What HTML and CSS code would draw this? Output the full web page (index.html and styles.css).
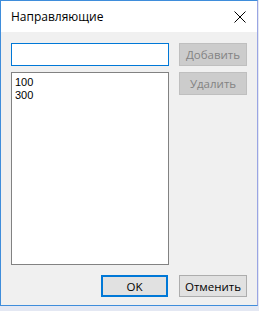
FILE: index.html
```html
<!doctype html>
<html>
<head>
<meta charset="utf-8">
<title>Направляющие</title>
<link rel="stylesheet" href="styles.css">
</head>
<body>
<div class="window">
  <div class="titlebar">
    <span class="title">Направляющие</span>
    <svg class="close" width="12" height="12" viewBox="0 0 12 12">
      <path d="M0.5 0.5 L11.5 11.5 M11.5 0.5 L0.5 11.5" stroke="#000" stroke-width="1" fill="none"/>
    </svg>
  </div>
  <div class="client">
    <div class="grid">
      <div class="edit"></div>
      <button class="btn disabled">Добавить</button>
      <div class="list">
        <div class="item">100</div>
        <div class="item">300</div>
      </div>
      <div class="side">
        <button class="btn disabled">Удалить</button>
      </div>
    </div>
    <div class="footer">
      <button class="btn default">OK</button>
      <button class="btn">Отменить</button>
    </div>
  </div>
</div>
</body>
</html>
```

FILE: styles.css
```css
body {
	margin: 0;
	background-color: #e4e8f3;
}
.window {
	width: 256px;
	border: 1px solid #3f8ddb;
	border-right-color: #9aa5e3;
	background-color: #f0f0f0;
	font-family: "Open Sans", "Noto Sans", sans-serif;
}
.titlebar {
	height: 31px;
	background-color: #fff;
	display: flex;
	align-items: center;
	padding: 0 10px 0 10px;
}
.title {
	flex: 1;
	font-size: 12px;
	color: #000;
}
.close {
	display: block;
	margin-right: 1px;
}
.client {
	padding: 11px 10px 8px 10px;
}
.grid {
	display: grid;
	grid-template-columns: 158px 68px;
	grid-template-rows: 23px 193px;
	column-gap: 10px;
	row-gap: 6px;
}
.edit {
	background-color: #fff;
	border: 1px solid #0078d7;
}
.list {
	background-color: #fff;
	border: 1px solid #828282;
	padding: 3px 3px;
	font-family: "Liberation Sans", sans-serif;
	font-size: 11px;
	line-height: 13px;
	color: #000;
}
.side {
	display: flex;
	flex-direction: column;
}
.btn {
	box-sizing: border-box;
	height: 23px;
	width: 68px;
	margin: 0;
	padding: 0;
	background-color: #e1e1e1;
	border: 1px solid #adadad;
	font-family: "Open Sans", "Noto Sans", sans-serif;
	font-size: 11.5px;
	color: #000;
}
.btn.disabled {
	background-color: #cccccc;
	border-color: #bfbfbf;
	color: #838383;
}
.footer {
	display: flex;
	justify-content: flex-end;
	gap: 11px;
	margin-top: 10px;
}
.footer .btn {
	height: 22px;
}
.btn.default {
	width: 67px;
	border: 2px solid #0078d7;
}
```
